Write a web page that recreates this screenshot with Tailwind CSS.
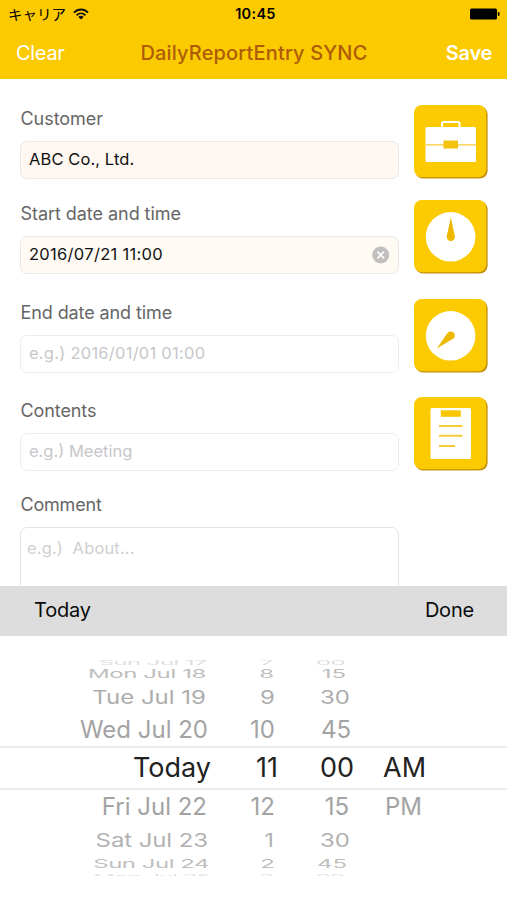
<!DOCTYPE html>
<html lang="en">
<head>
<meta charset="utf-8">
<title>Daily Report Entry</title>
<script src="https://cdn.jsdelivr.net/npm/@tailwindcss/browser@4"></script>
</head>
<body class="bg-white">
<div class="flex h-[900px] w-[507px] flex-col overflow-hidden bg-white font-['Inter','Noto_Sans_CJK_JP',sans-serif] text-black">
  <header class="h-[79px] shrink-0 bg-[#fcca00]">
    <div class="grid h-[27px] grid-cols-3 items-center pr-[7px] pl-2">
      <div class="flex items-center gap-[7px]">
        <span class="text-[14.5px] leading-[27px] font-['Noto_Sans_CJK_JP',sans-serif]">キャリア</span>
        <svg class="h-[12px] w-[16px]" viewBox="0 0 16 12"><g fill="none" stroke="#111" stroke-width="1.9"><path d="M1 4.6C5 .4 11 .4 15 4.6"/><path d="M3.6 7.3c2.6-2.6 6.2-2.6 8.8 0"/></g><path d="M8 11.5 5.3 8.9c1.5-1.4 3.9-1.4 5.4 0z" fill="#111"/></svg>
      </div>
      <div class="pl-[3px] text-center text-[14.5px] font-semibold tracking-[0.3px]">10:45</div>
      <svg class="ml-auto h-[12px] w-[30px]" viewBox="0 0 30 12"><rect x="0" y=".5" width="27" height="11" rx="1.5"/><rect x="27.8" y="4" width="1.7" height="4" rx=".8"/></svg>
    </div>
    <div class="flex h-[52px] items-center justify-between pr-[15px] pb-px pl-4 text-[20px] text-white">
      <span class="w-[76px] tracking-[-0.3px]">Clear</span>
      <span class="font-medium tracking-[0.15px] whitespace-nowrap text-[#ad5c08]">DailyReportEntry SYNC</span>
      <span class="w-[76px] text-right font-semibold tracking-[-0.3px]">Save</span>
    </div>
  </header>

  <main class="h-[507px] shrink-0 overflow-hidden pt-[26px] pr-[19px] pl-5 text-[16.5px] text-[#111]">
    <section class="flex h-[95px] gap-[15px]">
      <div class="w-[379px]">
        <div class="h-[36px] pt-px pl-[0.5px] text-[18px] leading-[26px] tracking-[-0.05px] text-[#666]">Customer</div>
        <div class="flex h-[37.500px] items-center rounded-[7px] border-[1.5px] border-[#ece8e5] bg-[#fff7f1] px-2 pb-px tracking-[0.1px]">ABC Co., Ltd.</div>
      </div>
      <svg class="h-[74px] w-[74px]" viewBox="0 0 74 74"><rect x="1.2" y="1.2" width="72.4" height="72.4" rx="8" fill="#c28e0b"/><rect width="72.3" height="72.3" rx="8" fill="#fcca00"/><path d="M28 22v-3.500a1.500 1.500 0 0 1 1.500-1.500h14.500a1.500 1.500 0 0 1 1.500 1.500V22" fill="none" stroke="#fff" stroke-width="2"/><rect x="11.500" y="22" width="50.500" height="35" rx="1.500" fill="#fff"/><path d="M12 39.800h50" stroke="#f4cb37" stroke-width="1.200"/><rect x="29.500" y="35.500" width="14.500" height="8" fill="#f4c20c"/></svg>
    </section>
    <section class="flex h-[99px] gap-[15px]">
      <div class="w-[379px]">
        <div class="h-[36px] pt-px pl-[0.5px] text-[18px] leading-[26px] tracking-[-0.05px] text-[#666]">Start date and time</div>
        <div class="flex h-[37.500px] items-center justify-between rounded-[7px] border-[1.5px] border-[#ece8e5] bg-[#fffaf4] px-2 pb-px"><span class="tracking-[0.3px]">2016/07/21 11:00</span>
          <svg class="mt-px h-[18px] w-[18px]" viewBox="0 0 18 18"><circle cx="8.700" cy="9" r="8.500" fill="#c1bfbe"/><path d="m5.400 5.700 6.600 6.600m0-6.600-6.600 6.600" stroke="#fff" stroke-width="1.700"/></svg>
        </div>
      </div>
      <svg class="h-[74px] w-[74px]" viewBox="0 0 74 74"><rect x="1.2" y="1.2" width="72.4" height="72.4" rx="8" fill="#c28e0b"/><rect width="72.3" height="72.3" rx="8" fill="#fcca00"/><circle cx="36.600" cy="36.800" r="24.800" fill="#fff"/><path d="M36.800 17.500 40.800 36a4.100 4.100 0 1 1-8 0z" fill="#ecb800"/></svg>
    </section>
    <section class="flex h-[98px] gap-[15px]">
      <div class="w-[379px]">
        <div class="h-[36px] pt-px pl-[0.5px] text-[18px] leading-[26px] tracking-[-0.1px] text-[#666]">End date and time</div>
        <div class="flex h-[37.500px] items-center rounded-[7px] border-[1.5px] border-[#ededed] px-2 pb-px tracking-[0.25px] text-[#c7c7ca]">e.g.) 2016/01/01 01:00</div>
      </div>
      <svg class="h-[74px] w-[74px]" viewBox="0 0 74 74"><rect x="1.2" y="1.2" width="72.4" height="72.4" rx="8" fill="#c28e0b"/><rect width="72.3" height="72.3" rx="8" fill="#fcca00"/><circle cx="36.600" cy="36.800" r="24.800" fill="#fff"/><path d="M22.800 49.500 33.300 34.300a4.100 4.100 0 1 1 5.400 5.800z" fill="#ecb800"/></svg>
    </section>
    <section class="flex h-[94px] gap-[15px]">
      <div class="w-[379px]">
        <div class="h-[36px] pt-px pl-[0.5px] text-[18px] leading-[26px] tracking-[-0.1px] text-[#666]">Contents</div>
        <div class="flex h-[37.500px] items-center rounded-[7px] border-[1.5px] border-[#ededed] px-2 pb-px text-[#c7c7ca]">e.g.) Meeting</div>
      </div>
      <svg class="h-[74px] w-[74px]" viewBox="0 0 74 74"><rect x="1.2" y="1.2" width="72.4" height="72.4" rx="8" fill="#c28e0b"/><rect width="72.3" height="72.3" rx="8" fill="#fcca00"/><rect x="16.500" y="11" width="40.500" height="51" rx="1.500" fill="#fff"/><rect x="26.800" y="13.300" width="20" height="6.500" fill="#f8c600"/><path d="M25 29h23.500M25 38.800h23.500M25 48.900h16" stroke="#f5cb38" stroke-width="2"/></svg>
    </section>
    <section class="w-[379px]">
      <div class="h-[36px] pt-px pl-[0.5px] text-[18px] leading-[26px] tracking-[-0.2px] text-[#666]">Comment</div>
      <div class="h-[90px] rounded-[7px] border-[1.5px] border-[#e4e4e4] px-[6px] pt-[7px] leading-[26px] tracking-[0.15px] whitespace-pre text-[#cfcfcf]">e.g.)  About...</div>
    </section>
  </main>

  <div class="flex h-[50px] shrink-0 items-center justify-between bg-[#dddddd] pr-[33px] pb-[3px] pl-[34px] text-[20px] tracking-[-0.2px] text-[#0b0b0b]">
    <span>Today</span><span>Done</span>
  </div>

  <div class="flex flex-col pt-[24px] text-[24px] leading-[32px] whitespace-nowrap text-[#a3a3a3]">
    <div class="flex h-[5px] items-end overflow-hidden text-[#dedede]">
      <div class="flex h-[32px] translate-y-[14px] scale-y-[.25] tracking-[-0.6px]"><span class="w-[207px] text-right">Sun Jul 17</span><span class="w-[66px] text-right">7</span><span class="w-[72px] text-right">00</span></div>
    </div>
    <div class="flex h-[17px] items-center text-[#bdbdbd]">
      <div class="flex scale-y-[.48]"><span class="w-[206px] text-right tracking-[-0.4px]">Mon Jul 18</span><span class="w-[68px] text-right">8</span><span class="w-[72px] text-right">15</span></div>
    </div>
    <div class="flex h-[30px] items-center pt-[2px] text-[#adadad]">
      <div class="flex scale-y-[.78]"><span class="w-[206px] text-right">Tue Jul 19</span><span class="w-[69px] text-right">9</span><span class="w-[75px] text-right">30</span></div>
    </div>
    <div class="flex h-[34px] items-center pt-[2px]">
      <span class="w-[208px] text-right">Wed Jul 20</span><span class="w-[67px] text-right">10</span><span class="w-[76px] text-right">45</span>
    </div>
    <div class="flex h-[44px] items-center border-y-2 border-[#eaeaea] pb-px text-[27px] text-[#222]">
      <span class="w-[211px] text-right">Today</span><span class="w-[67px] text-right">11</span><span class="w-[76px] text-right">00</span><span class="w-[29px]"></span><span>AM</span>
    </div>
    <div class="flex h-[34px] items-center">
      <span class="w-[207px] text-right">Fri Jul 22</span><span class="w-[68px] text-right">12</span><span class="w-[74px] text-right">15</span><span class="w-[36px]"></span><span>PM</span>
    </div>
    <div class="flex h-[32px] items-center pt-px text-[#b2b2b2]">
      <div class="flex scale-y-[.78]"><span class="w-[208px] text-right tracking-[-0.1px]">Sat Jul 23</span><span class="w-[66px] text-right">1</span><span class="w-[76px] text-right">30</span></div>
    </div>
    <div class="flex h-[15px] items-center text-[#c0c0c0]">
      <div class="flex scale-y-[.5]"><span class="w-[209px] text-right tracking-[-0.5px]">Sun Jul 24</span><span class="w-[66px] text-right">2</span><span class="w-[72px] text-right">45</span></div>
    </div>
    <div class="flex h-[5px] items-start overflow-hidden text-[#e2e2e2]">
      <div class="flex h-[32px] -translate-y-[10px] scale-y-[.25] tracking-[-1px]"><span class="w-[210px] text-right">Mon Jul 25</span><span class="w-[63px] text-right">3</span><span class="w-[71px] text-right">00</span></div>
    </div>
  </div>
</div>
</body>
</html>
